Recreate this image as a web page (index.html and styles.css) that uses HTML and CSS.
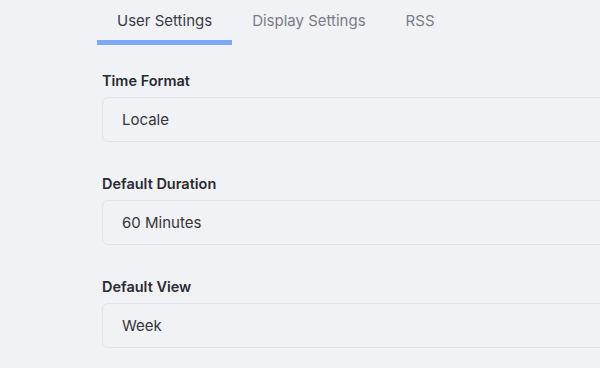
FILE: index.html
```html
<!DOCTYPE html>
<html>
<head>
<meta charset="utf-8">
<link rel="stylesheet" href="styles.css">
</head>
<body>
<div class="page">
  <nav class="tabs">
    <div class="tab active">User Settings</div>
    <div class="tab">Display Settings</div>
    <div class="tab">RSS</div>
  </nav>
  <form class="form">
    <div class="field">
      <label class="label">Time Format</label>
      <div class="input">Locale</div>
    </div>
    <div class="field">
      <label class="label">Default Duration</label>
      <div class="input">60 Minutes</div>
    </div>
    <div class="field">
      <label class="label">Default View</label>
      <div class="input">Week</div>
    </div>
  </form>
</div>
</body>
</html>
```
FILE: styles.css
```css
html, body {
  margin: 0;
  padding: 0;
  background: #f1f2f6;
}
body {
  font-family: Inter, Roboto, sans-serif;
  color: #2d2d36;
  overflow: hidden;
}
.page {
  padding-left: 97px;
}
.tabs {
  display: flex;
  height: 45px;
}
.tab {
  padding: 0 20px;
  font-size: 15px;
  line-height: 41px;
  color: #7a7b88;
  border-bottom: 5px solid transparent;
  box-sizing: border-box;
  height: 45px;
}
.tab.active {
  color: #3a3a44;
  border-bottom-color: #80a8f8;
}
.form {
  padding-left: 5px;
  padding-top: 26px;
  display: flex;
  flex-direction: column;
  gap: 32px;
}
.field {
  display: flex;
  flex-direction: column;
  gap: 6px;
}
.label {
  font-size: 14.5px;
  font-weight: 560;
  line-height: 20px;
  color: #2a2a33;
}
.input {
  height: 45px;
  box-sizing: border-box;
  margin-right: -20px;
  border: 1px solid #e3e4e9;
  border-radius: 6px;
  background: #f1f2f6;
  padding: 0 19px;
  font-size: 15px;
  line-height: 43px;
  color: #34343c;
}
```
